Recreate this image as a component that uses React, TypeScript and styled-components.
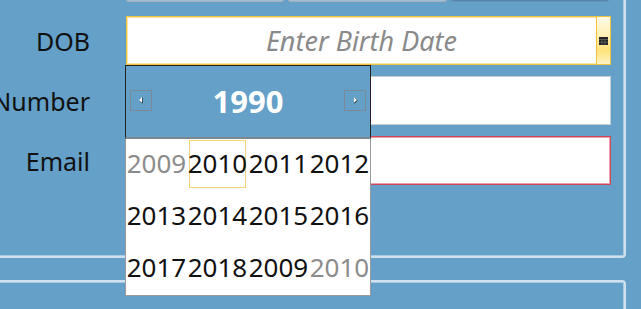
import React from 'react'
import styled, { createGlobalStyle } from 'styled-components'

const years = [
  { year: 2009, muted: true },
  { year: 2010, selected: true },
  { year: 2011 },
  { year: 2012 },
  { year: 2013 },
  { year: 2014 },
  { year: 2015 },
  { year: 2016 },
  { year: 2017 },
  { year: 2018 },
  { year: 2009 },
  { year: 2010, muted: true },
]

const GlobalStyle = createGlobalStyle`
  html, body {
    margin: 0;
    padding: 0;
    background: #64a0c8;
    overflow: hidden;
  }
  body {
    font-family: 'Noto Sans', 'Open Sans', sans-serif;
  }
`

const Page = styled.div`
  width: 641px;
  height: 309px;
  overflow: hidden;
  background: #64a0c8;
`

const Panel = styled.section<{ $top: number }>`
  box-sizing: border-box;
  width: 646px;
  margin-left: -20px;
  margin-top: ${({ $top }) => $top}px;
  border: 2px solid #cfe1ee;
  border-radius: 4px;
  box-shadow: inset 0 0 0 1px #a9cbe2;
`

const FormGrid = styled.div`
  display: grid;
  grid-template-columns: 108px 485px;
  column-gap: 36px;
  row-gap: 11px;
  align-items: center;
  padding: 0 0 71px 0;
`

const TabRow = styled.div`
  grid-column: 2;
  display: grid;
  grid-template-columns: repeat(3, 1fr);
  gap: 4px;
  height: 40px;
  margin-right: 2px;
  margin-bottom: 3px;
`

const Tab = styled.button<{ $active?: boolean }>`
  border: 1px solid ${({ $active }) => ($active ? '#6f8fae' : '#a3afbb')};
  border-radius: 2px;
  background: ${({ $active }) => ($active ? '#5791c0' : '#64a0c8')};
  box-shadow: inset 0 -1px 0 ${({ $active }) => ($active ? '#4f86b3' : '#9fbfd6')};
`

const Label = styled.label`
  justify-self: end;
  font-size: 25px;
  color: #111;
  line-height: 1;
  margin-top: 1px;
`

const Field = styled.div<{ $tone: 'focus' | 'plain' | 'error' }>`
  position: relative;
  box-sizing: border-box;
  height: 49px;
  background: #fff;
  border: 1px solid
    ${({ $tone }) =>
      $tone === 'focus' ? '#f1c23e' : $tone === 'error' ? '#cf4656' : '#c6ccd2'};
  box-shadow: ${({ $tone }) =>
    $tone === 'focus'
      ? 'inset 0 0 0 1px #fbe7a8'
      : $tone === 'error'
        ? 'inset 0 0 0 1px #e9a3ab'
        : 'none'};
  display: flex;
`

const Placeholder = styled.div`
  flex: 1;
  display: flex;
  align-items: center;
  justify-content: center;
  font-size: 27px;
  font-style: italic;
  color: #8a8a8a;
`

const DropButton = styled.div`
  width: 13px;
  border-left: 1px solid #f1c23e;
  background: linear-gradient(#fffbe6, #fff0b4 40%, #ffe27a 70%, #fff3c4);
  display: flex;
  align-items: center;
  justify-content: center;
`

const Popup = styled.div`
  position: absolute;
  top: 48px;
  left: -2px;
  width: 246px;
  z-index: 10;
  display: flex;
  flex-direction: column;
`

const PopupHeader = styled.div`
  box-sizing: border-box;
  height: 74px;
  background: #64a0c8;
  border: 1px solid #222;
  border-bottom: 2px solid #7d8790;
  display: flex;
  align-items: center;
  justify-content: space-between;
  padding: 0 4px 2px 4px;
`

const NavButton = styled.div`
  box-sizing: border-box;
  width: 22px;
  height: 21px;
  border: 1px solid #7b8896;
  display: flex;
  align-items: center;
  justify-content: center;
`

const YearTitle = styled.div`
  font-size: 31px;
  font-weight: 700;
  color: #fff;
  line-height: 1;
  margin-bottom: -2px;
`

const YearGrid = styled.div`
  box-sizing: border-box;
  display: grid;
  grid-template-columns: repeat(4, 61px);
  grid-auto-rows: 52px;
  background: #fff;
  border: 1px solid #9a9a9a;
  border-top: none;
`

const YearCell = styled.div<{ $muted?: boolean; $selected?: boolean }>`
  display: flex;
  align-items: center;
  justify-content: center;
  margin: 1px 2px 3px 2px;
  border: 1px solid ${({ $selected }) => ($selected ? '#f3d57a' : 'transparent')};
  font-size: 26px;
  color: ${({ $muted }) => ($muted ? '#8c8c8c' : '#111')};
  white-space: nowrap;
  padding-bottom: 2px;
`

const Arrow = ({ dir }: { dir: 'left' | 'right' }) => (
  <svg width="7" height="9" viewBox="0 0 7 9">
    {dir === 'left' ? (
      <>
        <path d="M4.6 1.2 L1.4 4.5 L4.6 7.8 Z" fill="#222" />
        <path d="M4 1 L1 4.2 L4 6.6 Z" fill="#fff" />
      </>
    ) : (
      <>
        <path d="M2.4 1.2 L5.6 4.5 L2.4 7.8 Z" fill="#222" />
        <path d="M2 1 L5 4.2 L2 6.6 Z" fill="#fff" />
      </>
    )}
  </svg>
)

const CalendarGlyph = () => (
  <svg width="9" height="8" viewBox="0 0 9 8">
    <rect x="0" y="0" width="9" height="8" fill="#222" />
    <path d="M0 2.5 H9 M3 2.5 V8 M6 2.5 V8 M0 5.2 H9" stroke="#6b6b6b" strokeWidth="0.7" />
  </svg>
)

const App = () => (
  <Page>
    <GlobalStyle />
    <Panel $top={-40}>
      <FormGrid>
        <TabRow>
          <Tab />
          <Tab />
          <Tab $active />
        </TabRow>

        <Label>DOB</Label>
        <Field $tone="focus">
          <Placeholder>Enter Birth Date</Placeholder>
          <DropButton>
            <CalendarGlyph />
          </DropButton>
          <Popup>
            <PopupHeader>
              <NavButton>
                <Arrow dir="left" />
              </NavButton>
              <YearTitle>1990</YearTitle>
              <NavButton>
                <Arrow dir="right" />
              </NavButton>
            </PopupHeader>
            <YearGrid>
              {years.map((y, i) => (
                <YearCell key={`${y.year}_${i}`} $muted={y.muted} $selected={y.selected}>
                  {y.year}
                </YearCell>
              ))}
            </YearGrid>
          </Popup>
        </Field>

        <Label>Number</Label>
        <Field $tone="plain" />

        <Label>Email</Label>
        <Field $tone="error" />
      </FormGrid>
    </Panel>
    <Panel $top={22}>
      <FormGrid />
    </Panel>
  </Page>
)

export default App
